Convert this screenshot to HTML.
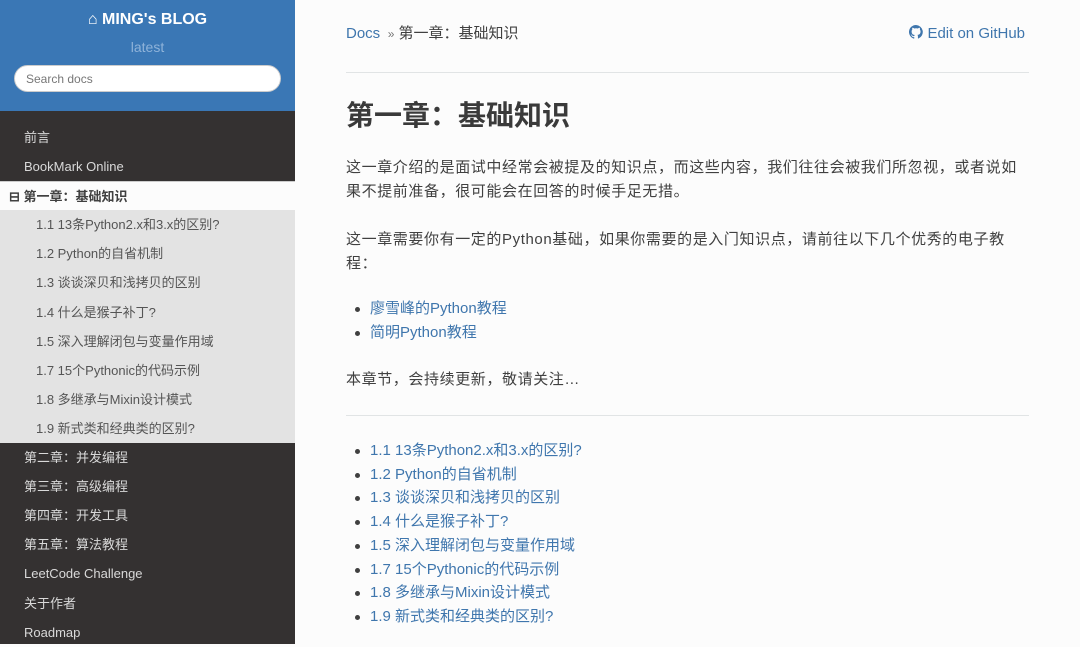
<!DOCTYPE html>
<html><head><meta charset="utf-8"><style>
*{margin:0;padding:0;box-sizing:border-box}
body{width:1080px;height:644px;overflow:hidden;background:#fcfcfc;font-family:"Liberation Sans","Noto Sans CJK SC",sans-serif;color:#404040;position:relative}
.side{position:absolute;left:0;top:0;width:295px;height:644px;background:#343131}
.top{background:#3a77b5;height:111px;text-align:center;padding-top:10px}
.top .t{color:#fff;font-weight:bold;font-size:16px;line-height:20px}
.top .v{color:#8fb3d9;font-size:14px;margin-top:8px;line-height:18px}
.top input{display:block;margin:9px auto 0;width:267px;height:27px;border-radius:14px;border:1px solid #ccc;padding-left:11px;font-size:12px;font-family:inherit;color:#777;background:#fff}
.nav div{height:29.1px;line-height:29px;font-size:13px;color:#d9d9d9;padding-left:24px;white-space:nowrap}
.nav .cur{background:#fcfcfc;color:#404040;font-weight:bold;padding-left:9px;border-top:1px solid #ccc}
.nav .sub{background:#e3e3e3;color:#555;padding-left:36px}
.main{position:absolute;left:346px;top:0;width:683px}
.bc{position:absolute;top:24px;font-size:15px;line-height:20px;width:683px}
.bc a{color:#3f76ad;text-decoration:none}
.bc .r{position:absolute;right:4px;top:0;color:#3f76ad}
hr{border:0;border-top:1px solid #e1e4e5;position:absolute;left:0;width:683px}
h1{position:absolute;top:98px;font-size:28px;line-height:36px;color:#3a3a3a}
p,ul{position:absolute;font-size:15px;line-height:24px;width:680px}
p{letter-spacing:0.6px}
ul{list-style:none;line-height:23.7px}
li{padding-left:24px;position:relative;color:#3f76ad}
li:before{content:"";position:absolute;left:9px;top:10px;width:5px;height:5px;border-radius:50%;background:#404040}
</style></head><body>
<div class="side">
<div class="top"><div class="t">&#8962; MING's BLOG</div><div class="v">latest</div><input value="Search docs"></div>
<div class="nav" style="padding-top:12px">
<div>前言</div><div>BookMark Online</div>
<div class="cur">⊟ 第一章：基础知识</div>
<div class="sub">1.1 13条Python2.x和3.x的区别?</div>
<div class="sub">1.2 Python的自省机制</div>
<div class="sub">1.3 谈谈深贝和浅拷贝的区别</div>
<div class="sub">1.4 什么是猴子补丁?</div>
<div class="sub">1.5 深入理解闭包与变量作用域</div>
<div class="sub">1.7 15个Pythonic的代码示例</div>
<div class="sub">1.8 多继承与Mixin设计模式</div>
<div class="sub">1.9 新式类和经典类的区别?</div>
<div>第二章：并发编程</div><div>第三章：高级编程</div><div>第四章：开发工具</div><div>第五章：算法教程</div><div>LeetCode Challenge</div><div>关于作者</div><div>Roadmap</div>
</div></div>
<div class="main">
<div class="bc"><a>Docs</a> <span style="font-size:12px;color:#777">&nbsp;»</span> 第一章：基础知识<span class="r"><svg width="14" height="14" viewBox="0 0 16 16" style="vertical-align:-1px"><path fill="#3f76ad" d="M8 0a8 8 0 0 0-2.5 15.6c.4 0 .5-.2.5-.4v-1.5c-2.2.5-2.7-1-2.7-1-.4-.9-.9-1.2-.9-1.2-.7-.5.1-.5.1-.5.8.1 1.2.8 1.2.8.7 1.3 1.9.9 2.4.7 0-.5.3-.9.5-1.1-1.8-.2-3.6-.9-3.6-4 0-.9.3-1.6.8-2.1-.1-.2-.4-1 .1-2.1 0 0 .7-.2 2.2.8a7.5 7.5 0 0 1 4 0c1.5-1 2.2-.8 2.2-.8.4 1.1.2 1.900.1 2.1.5.6.8 1.3.8 2.1 0 3.1-1.9 3.7-3.6 3.9.3.3.6.8.6 1.5v2.2c0 .2.1.5.6.4A8 8 0 0 0 8 0z"/></svg> Edit on GitHub</span></div>
<hr style="top:72px">
<h1>第一章：基础知识</h1>
<p style="top:156px">这一章介绍的是面试中经常会被提及的知识点，而这些内容，我们往往会被我们所忽视，或者说如果不提前准备，很可能会在回答的时候手足无措。</p>
<p style="top:228px">这一章需要你有一定的Python基础，如果你需要的是入门知识点，请前往以下几个优秀的电子教程：</p>
<ul style="top:297px"><li>廖雪峰的Python教程</li><li>简明Python教程</li></ul>
<p style="top:368px">本章节，会持续更新，敬请关注…</p>
<hr style="top:415px">
<ul style="top:439px">
<li>1.1 13条Python2.x和3.x的区别?</li><li>1.2 Python的自省机制</li><li>1.3 谈谈深贝和浅拷贝的区别</li><li>1.4 什么是猴子补丁?</li><li>1.5 深入理解闭包与变量作用域</li><li>1.7 15个Pythonic的代码示例</li><li>1.8 多继承与Mixin设计模式</li><li>1.9 新式类和经典类的区别?</li>
</ul>
</div>
</body></html>
